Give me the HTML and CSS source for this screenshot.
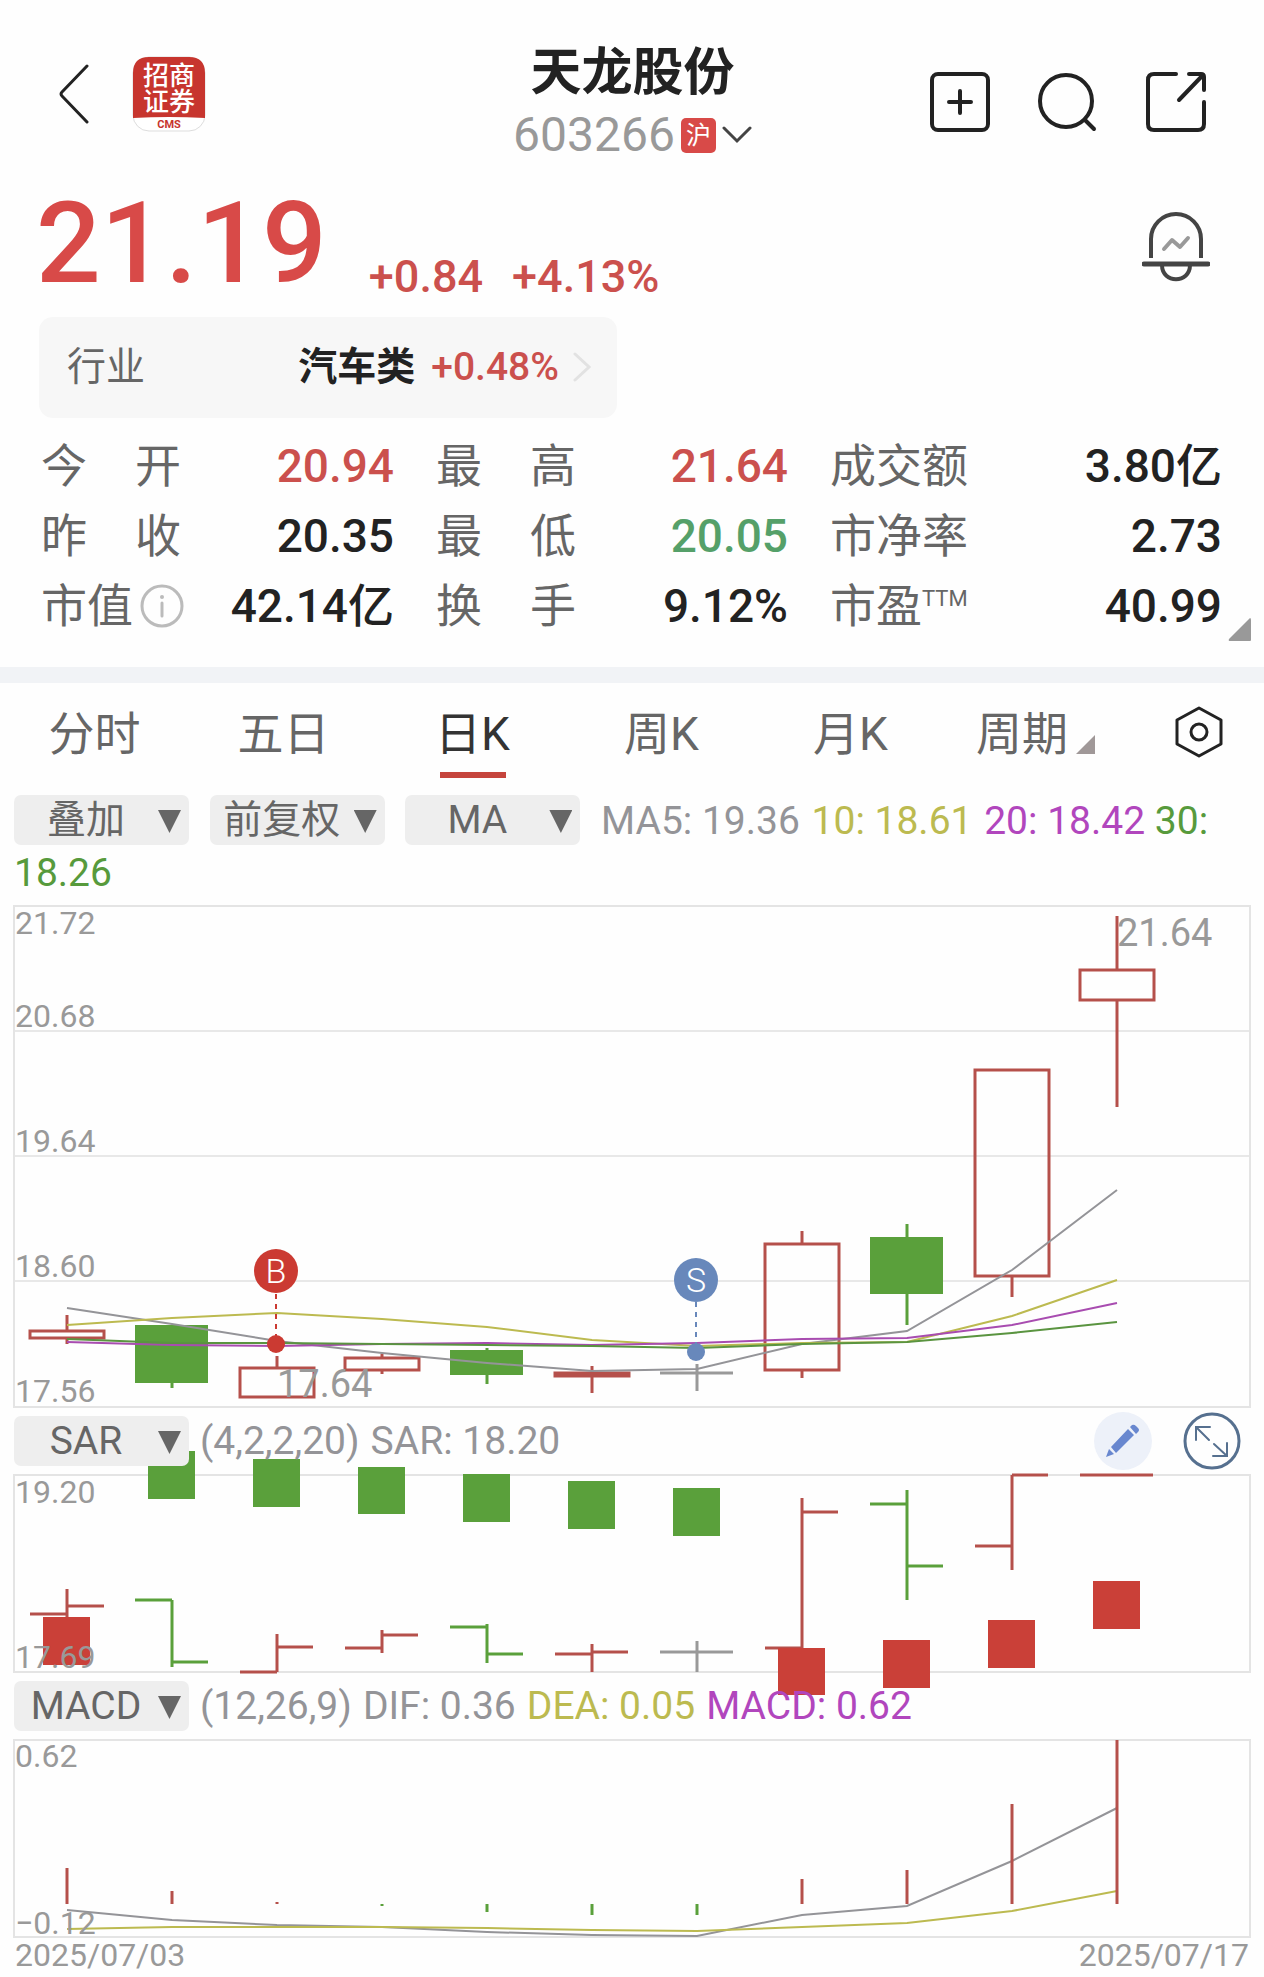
FILE: index.html
```html
<!DOCTYPE html>
<html lang="zh-CN">

<head>
    <meta charset="UTF-8">
    <meta name="viewport" content="width=device-width, initial-scale=1.0">
    <title>天龙股份 603266</title>
    <link rel="stylesheet" href="styles.css">
</head>

<body>
    <header class="top-bar">
        <div class="top-left">
            <button class="icon-btn" type="button" aria-label="返回">
                <svg width="30" height="60" viewBox="0 0 30 60" fill="none" stroke="#222" stroke-width="3" stroke-linecap="round" stroke-linejoin="round">
                    <path d="M28 2 L3 28 Q1 30 3 32 L28 58" />
                </svg>
            </button>
            <svg class="broker-logo" width="74" height="76" viewBox="0 0 74 76">
                <rect x="1" y="1" width="72" height="74" rx="16" fill="#fff" stroke="#ddd" />
                <path d="M1 62 V17 Q1 1 17 1 H57 Q73 1 73 17 V62 Q37 60 1 62 Z" fill="#c7352e" />
                <text class="logo-cn" x="37" y="29">招商</text>
                <text class="logo-cn" x="37" y="55">证券</text>
                <text class="logo-en" x="37" y="72">CMS</text>
            </svg>
        </div>
        <div class="stock">
            <h1 class="stock-name">天龙股份</h1>
            <div class="stock-code">
                <span>603266</span>
                <span class="market">沪</span>
                <svg width="30" height="18" viewBox="0 0 30 18" fill="none" stroke="#444" stroke-width="3" stroke-linecap="round">
                    <path d="M2 2 L15 15 L28 2" />
                </svg>
            </div>
        </div>
        <div class="top-right">
            <button class="icon-btn" type="button" aria-label="加自选">
                <svg width="60" height="60" viewBox="0 0 60 60" fill="none" stroke="#222" stroke-width="4" stroke-linecap="round">
                    <rect x="2" y="2" width="56" height="56" rx="6" />
                    <path d="M30 19 V41 M19 30 H41" />
                </svg>
            </button>
            <button class="icon-btn" type="button" aria-label="搜索">
                <svg width="60" height="60" viewBox="0 0 60 60" fill="none" stroke="#222" stroke-width="4" stroke-linecap="round">
                    <circle cx="28" cy="29" r="26" />
                    <path d="M47 48 L56 57" />
                </svg>
            </button>
            <button class="icon-btn" type="button" aria-label="分享">
                <svg width="60" height="60" viewBox="0 0 60 60" fill="none" stroke="#222" stroke-width="4" stroke-linecap="round" stroke-linejoin="round">
                    <path d="M30 2 H8 Q2 2 2 8 V52 Q2 58 8 58 H52 Q58 58 58 52 V30" />
                    <path d="M43 2 H55 Q58 2 58 5 V18 M57 3 L33 28" />
                </svg>
            </button>
        </div>
    </header>

    <section class="quote">
        <div class="price-row">
            <span class="price">21.19</span>
            <span class="change">+0.84</span>
            <span class="change">+4.13%</span>
            <button class="icon-btn alert-btn" type="button" aria-label="预警">
                <svg width="68" height="70" viewBox="0 0 68 70" fill="none" stroke="#444" stroke-width="4">
                    <path d="M9 46 V27 A25 25 0 0 1 59 27 V46" />
                    <path d="M2 52 H66" stroke-width="5" stroke-linecap="round" />
                    <path d="M20 53 C20 72 48 72 48 53" />
                    <path d="M22 37 L30 28 L38 35 L46 26" stroke="#999" stroke-linecap="round" stroke-linejoin="round" />
                </svg>
            </button>
        </div>

        <a class="industry" href="#">
            <span class="industry-label">行业</span>
            <strong class="industry-name">汽车类</strong>
            <span class="industry-change">+0.48%</span>
            <svg width="18" height="30" viewBox="0 0 18 30" fill="none" stroke="#e2e2e2" stroke-width="3" stroke-linecap="round">
                <path d="M2 2 L16 15 L2 28" />
            </svg>
        </a>

        <dl class="stats">
            <div class="stat"><dt class="spread">今开</dt><dd class="up">20.94</dd></div>
            <div class="stat"><dt class="spread">最高</dt><dd class="up">21.64</dd></div>
            <div class="stat"><dt>成交额</dt><dd>3.80亿</dd></div>
            <div class="stat"><dt class="spread">昨收</dt><dd>20.35</dd></div>
            <div class="stat"><dt class="spread">最低</dt><dd class="down">20.05</dd></div>
            <div class="stat"><dt>市净率</dt><dd>2.73</dd></div>
            <div class="stat">
                <dt class="with-info">市值
                    <svg width="44" height="44" viewBox="0 0 44 44" fill="none" stroke="#bbb" stroke-width="3">
                        <circle cx="22" cy="22" r="20" />
                        <path d="M22 19 V32" stroke-linecap="round" />
                        <circle cx="22" cy="13" r="2" fill="#bbb" stroke="none" />
                    </svg>
                </dt>
                <dd>42.14亿</dd>
            </div>
            <div class="stat"><dt class="spread">换手</dt><dd>9.12%</dd></div>
            <div class="stat"><dt>市盈<sup>TTM</sup></dt><dd>40.99</dd></div>
        </dl>
        <svg class="expand-corner" width="23" height="23" viewBox="0 0 23 23"><path d="M22 0 Q23 0 23 2 V22 Q23 23 22 23 H2 Q0 23 1 21 Z" fill="#999" /></svg>
    </section>

    <nav class="tabs">
        <button class="tab" type="button">分时</button>
        <button class="tab" type="button">五日</button>
        <button class="tab active" type="button">日K</button>
        <button class="tab" type="button">周K</button>
        <button class="tab" type="button">月K</button>
        <button class="tab more" type="button">周期</button>
        <button class="tab" type="button" aria-label="设置">
            <svg width="48" height="52" viewBox="0 0 48 52" fill="none" stroke="#222" stroke-width="3" stroke-linejoin="round">
                <path d="M24 2 L46 14 V38 L24 50 L2 38 V14 Z" />
                <circle cx="24" cy="26" r="8" />
            </svg>
        </button>
    </nav>

    <main class="charts">
        <div class="toolbar">
            <span class="picker"><select aria-label="叠加"><option>叠加</option></select></span>
            <span class="picker"><select aria-label="复权"><option>前复权</option></select></span>
            <span class="picker"><select aria-label="主图指标"><option>MA</option></select></span>
            <span class="ma5">MA5: 19.36</span>
            <span class="ma10">10: 18.61</span>
            <span class="ma20">20: 18.42</span>
            <span class="ma30">30:</span>
            <span class="ma30">18.26</span>
        </div>

        <svg class="chart" viewBox="0 0 1264 503">
            <g class="grid">
                <path d="M14 126 H1250 M14 251 H1250 M14 376 H1250" stroke="#d2d2d2" stroke-width="1" />
                <rect x="14" y="1" width="1236" height="501" />
            </g>

            <!-- candles, 105 apart -->
            <g class="up-line">
                <path d="M67 410 V426 M67 433 V439" />
                <rect x="30" y="426" width="74" height="7" />
                <path d="M277 451 V463" />
                <rect x="240" y="463" width="74" height="29" />
                <path d="M382 449 V453 M382 465 V469" />
                <rect x="345" y="453" width="74" height="12" />
                <path d="M592 461 V488" />
                <rect x="555" y="468" width="74" height="3" />
                <path d="M802 326 V339 M802 465 V473" />
                <rect x="765" y="339" width="74" height="126" />
                <path d="M1012 371 V392" />
                <rect x="975" y="165" width="74" height="206" />
                <path d="M1117 11 V65 M1117 95 V202" />
                <rect x="1080" y="65" width="74" height="30" />
            </g>
            <g class="down-line">
                <path d="M172 478 V483 M487 443 V479 M907 319 V420" />
                <rect x="135" y="420" width="73" height="58" />
                <rect x="450" y="445" width="73" height="25" />
                <rect x="870" y="332" width="73" height="57" />
            </g>
            <path class="flat-line" d="M697 459 V486 M660 468 H733" />

            <text class="mark-text" x="277" y="492">17.64</text>
            <text class="mark-text" x="1117" y="41">21.64</text>

            <polyline class="line ma5-line" points="67,403 172,419 277,436 382,448 487,458 592,466 697,464 802,439 907,426 1012,365 1117,285" />
            <polyline class="line ma10-line" points="67,420 172,413 277,408 382,414 487,422 592,435 697,441 802,438 907,437 1012,411 1117,375" />
            <polyline class="line ma20-line" points="67,437 172,440 277,441 382,439 487,438 592,440 697,438 802,434 907,433 1012,420 1117,398" />
            <polyline class="line ma30-line" points="67,434 172,438 277,438 382,439 487,440 592,441 697,443 802,439 907,437 1012,428 1117,417" />

            <!-- buy / sell marks -->
            <path d="M276 389 V431" stroke="#cb3a32" stroke-width="2" stroke-dasharray="5 5" />
            <circle cx="276" cy="366" r="22" fill="#cb3a32" />
            <circle cx="276" cy="439" r="9" fill="#cb3a32" />
            <text class="badge-text" x="276" y="378">B</text>
            <path d="M696 397 V439" stroke="#6888bb" stroke-width="2" stroke-dasharray="5 5" />
            <circle cx="696" cy="375" r="22" fill="#6888bb" />
            <circle cx="696" cy="447" r="9" fill="#6888bb" />
            <text class="badge-text" x="696" y="387">S</text>

            <g class="axis">
                <text x="15" y="29">21.72</text>
                <text x="15" y="122">20.68</text>
                <text x="15" y="247">19.64</text>
                <text x="15" y="372">18.60</text>
                <text x="15" y="497">17.56</text>
            </g>
        </svg>

        <div class="sub-bar">
            <span class="picker"><select aria-label="副图指标一"><option>SAR</option></select></span>
            <span class="ma5">(4,2,2,20)</span>
            <span class="ma5">SAR: 18.20</span>
            <div class="sub-tools">
                <button class="icon-btn" type="button" aria-label="画线">
                    <svg width="58" height="58" viewBox="0 0 58 58">
                        <circle cx="29" cy="29" r="29" fill="#edf1f9" />
                        <path d="M17 35 L34 17 L40 23 L22 41 Z M36 15 L38 13 Q40 12 42 14 L44 16 Q46 18 44 20 L42 22 Z M15 37 L20 42 L12 45 Z" fill="#6887cf" />
                    </svg>
                </button>
                <button class="icon-btn" type="button" aria-label="全屏">
                    <svg width="58" height="58" viewBox="0 0 58 58" fill="none" stroke="#56708f" stroke-width="3">
                        <circle cx="29" cy="29" r="27" />
                        <path d="M13 28 V15 H27 M13 15 L26 28 M31 32 L44 44 M44 31 V44 H30" stroke-width="2" stroke-linecap="round" />
                    </svg>
                </button>
            </div>
        </div>

        <svg class="chart" viewBox="0 0 1264 199">
            <rect class="grid" x="14" y="1" width="1236" height="197" />
            <g class="up-line">
                <path d="M30 140 H67 M67 115 V145 M67 132 H104" />
                <path d="M240 198 H277 M277 160 V198 M277 173 H313" />
                <path d="M345 174 H382 M382 156 V179 M382 161 H418" />
                <path d="M555 180 H592 M592 170 V198 M592 178 H628" />
                <path d="M765 174 H802 M802 24 V176 M802 38 H838" />
                <path d="M975 72 H1012 M1012 1 V96 M1012 1 H1048" />
                <path d="M1080 1 H1153" />
            </g>
            <g class="down-line">
                <path d="M135 126 H172 M172 126 V193 M172 188 H208" />
                <path d="M450 153 H487 M487 150 V189 M487 180 H523" />
                <path d="M870 30 H907 M907 16 V126 M907 92 H943" />
            </g>
            <path class="flat-line" d="M697 167 V198 M660 178 H733" />
            <g class="sar-down">
                <rect x="148" y="-23" width="47" height="48" />
                <rect x="253" y="-15" width="47" height="48" />
                <rect x="358" y="-7" width="47" height="47" />
                <rect x="463" y="0" width="47" height="48" />
                <rect x="568" y="7" width="47" height="48" />
                <rect x="673" y="14" width="47" height="48" />
            </g>
            <g class="sar-up">
                <rect x="43" y="143" width="47" height="48" />
                <rect x="778" y="174" width="47" height="47" />
                <rect x="883" y="166" width="47" height="48" />
                <rect x="988" y="146" width="47" height="48" />
                <rect x="1093" y="107" width="47" height="48" />
            </g>
            <g class="axis">
                <text x="15" y="29">19.20</text>
                <text x="15" y="194">17.69</text>
            </g>
        </svg>

        <div class="sub-bar">
            <span class="picker"><select aria-label="副图指标二"><option>MACD</option></select></span>
            <span class="ma5">(12,26,9)</span>
            <span class="ma5">DIF: 0.36</span>
            <span class="ma10">DEA: 0.05</span>
            <span class="ma20">MACD: 0.62</span>
        </div>

        <svg class="chart" viewBox="0 0 1264 199">
            <rect class="grid" x="14" y="1" width="1236" height="197" />
            <polyline class="line ma5-line" points="67,171 172,181 277,186 382,188 487,193 592,196 697,197 802,176 907,167 1012,122 1117,69" />
            <polyline class="line ma10-line" points="67,190 172,188 277,188 382,188 487,189 592,191 697,192 802,188 907,184 1012,172 1117,152" />
            <path class="up-line" d="M67 129 V165 M172 152 V165 M277 163 V165 M802 140 V165 M907 131 V165 M1012 65 V165 M1117 1 V165" />
            <path class="down-line" d="M382 165 V167 M487 165 V173 M592 165 V176 M697 165 V176" />
            <g class="axis">
                <text x="15" y="28">0.62</text>
                <text x="15" y="195">−0.12</text>
            </g>
        </svg>

        <div class="dates">
            <span>2025/07/03</span>
            <span>2025/07/17</span>
        </div>
    </main>
</body>

</html>
```
FILE: styles.css
```css
* {
    box-sizing: border-box;
}

body {
    margin: 0;
    background: #fefefe;
    color: #222;
    font-family: Roboto, "Noto Sans CJK SC", sans-serif;
}

button {
    padding: 0;
    border: 0;
    background: none;
    font-family: inherit;
    color: inherit;
}

svg {
    display: block;
}

/* header */
.top-bar {
    display: grid;
    grid-template-columns: 1fr auto 1fr;
    align-items: center;
    padding: 39px 58px 0 59px;
}

.top-left {
    display: flex;
    align-items: center;
    gap: 43px;
    padding-bottom: 16px;
}

.logo-cn {
    font-family: "Noto Sans CJK SC", sans-serif;
    font-size: 26px;
    font-weight: 500;
    text-anchor: middle;
    fill: #fff;
}

.logo-en {
    font-size: 11px;
    font-weight: 700;
    text-anchor: middle;
    fill: #c7352e;
}

.stock {
    padding-top: 2px;
}

.stock-name {
    margin: 0;
    font-size: 51px;
    line-height: 64px;
    font-weight: 700;
    text-align: center;
}

.stock-code {
    display: flex;
    align-items: center;
    justify-content: center;
    gap: 6px;
    font-size: 48px;
    line-height: 60px;
    color: #999;
}

.market {
    width: 35px;
    border-radius: 5px;
    background: #d84a48;
    color: #fff;
    font-size: 25px;
    line-height: 35px;
    text-align: center;
}

.top-right {
    display: flex;
    justify-content: flex-end;
    gap: 48px;
}

/* quote */
.quote {
    position: relative;
    padding: 19px 42px 26px 41px;
    border-bottom: 16px solid #f1f3f6;
}

.price-row {
    display: flex;
    align-items: flex-end;
    padding-right: 12px;
}

.price {
    margin-left: -5px;
    margin-right: 13px;
    color: #d84a48;
    font-size: 114px;
    line-height: 118px;
    font-weight: 500;
}

.change {
    margin-left: 29px;
    color: #cb504d;
    font-size: 45px;
    line-height: 50px;
    font-weight: 500;
}

.alert-btn {
    align-self: flex-end;
    margin: 0 0 20px auto;
}

.industry {
    display: flex;
    align-items: center;
    max-width: 578px;
    margin: 15px 0 13px -2px;
    padding: 25px 26px 26px 28px;
    border-radius: 14px;
    background: #f7f7f7;
    color: #222;
    font-size: 39px;
    line-height: 50px;
    text-decoration: none;
}

.industry-label {
    margin-right: auto;
    color: #666;
}

.industry-name {
    margin-right: 16px;
}

.industry-change {
    margin-right: 14px;
    color: #cb504d;
    font-weight: 500;
}

.stats {
    display: grid;
    grid-template-columns: 353fr 352fr 392fr;
    column-gap: 42px;
    margin: 0;
    font-size: 46px;
    line-height: 70px;
}

.stat {
    display: flex;
    justify-content: space-between;
}

.stat dt {
    color: #666;
}

.stat dd {
    margin: 0;
    font-weight: 500;
}

.stat .spread {
    width: 140px;
    text-align-last: justify;
    text-justify: inter-character;
}

.stat .up {
    color: #cb504d;
}

.stat .down {
    color: #55a069;
}

.with-info {
    display: flex;
    align-items: center;
    gap: 7px;
}

.stat sup {
    font-size: 22px;
    line-height: 22px;
}

.expand-corner {
    position: absolute;
    right: 13px;
    bottom: 26px;
}

/* period tabs */
.tabs {
    display: grid;
    grid-template-columns: repeat(6, 1fr) 130px;
    padding: 23px 0 17px;
}

.tab {
    display: flex;
    flex-direction: column;
    align-items: center;
    height: 72px;
    color: #666;
    font-size: 46px;
    line-height: 56px;
}

.tab.active {
    color: #333;
}

.tab.active::after {
    content: "";
    width: 66px;
    height: 6px;
    margin-top: 10px;
    background: #c5443c;
}

.tab.more {
    flex-direction: row;
    align-items: flex-start;
    justify-content: center;
    gap: 8px;
    padding-right: 8px;
}

.tab.more::after {
    content: "";
    width: 19px;
    height: 19px;
    margin-top: 29px;
    background: #a09898;
    clip-path: polygon(100% 0, 100% 100%, 0 100%);
}

/* charts */
.toolbar {
    padding: 0 14px 6px;
    font-size: 39px;
    line-height: 52px;
}

.toolbar .picker {
    margin-right: 11px;
    vertical-align: top;
}

.toolbar .ma5,
.toolbar .ma10 {
    margin-right: 2px;
}

.picker {
    position: relative;
    display: inline-block;
    width: 175px;
    height: 50px;
}

.picker select {
    appearance: none;
    display: block;
    width: 100%;
    height: 100%;
    padding: 0 31px 0 0;
    border: 0;
    border-radius: 7px;
    background: #eee;
    color: #666;
    font-family: inherit;
    font-size: 39px;
    text-align-last: center;
}

.picker::after {
    content: "";
    position: absolute;
    top: 15px;
    right: 8px;
    width: 23px;
    height: 23px;
    background: #666;
    clip-path: polygon(0 0, 100% 0, 50% 100%);
    pointer-events: none;
}

.ma5 {
    color: #949498;
}

.ma10 {
    color: #bcba50;
}

.ma20 {
    color: #b146bd;
}

.ma30 {
    color: #579a3c;
}

.sub-bar {
    position: relative;
    z-index: 1;
    display: flex;
    align-items: center;
    gap: 11px;
    height: 50px;
    margin: 8px 0;
    padding: 0 23px 0 14px;
    font-size: 39px;
}

.sub-tools {
    display: flex;
    gap: 31px;
    margin-left: auto;
}

.chart {
    width: 100%;
    height: auto;
    overflow: visible;
}

.grid {
    fill: none;
    stroke: #e4e4e4;
    stroke-width: 2;
}

.up-line {
    fill: none;
    stroke: #b5504b;
    stroke-width: 3;
}

.down-line {
    fill: #5aa03b;
    stroke: #5aa03b;
    stroke-width: 3;
}

.down-line rect {
    stroke: none;
}

.flat-line {
    stroke: #999;
    stroke-width: 3;
}

.sar-up {
    fill: #ca4038;
}

.sar-down {
    fill: #5aa03b;
}

.line {
    fill: none;
    stroke-width: 2;
}

.ma5-line {
    stroke: #949498;
}

.ma10-line {
    stroke: #bcba50;
}

.ma20-line {
    stroke: #a84cb0;
}

.ma30-line {
    stroke: #5a9440;
}

.axis {
    font-size: 32px;
    fill: #999;
}

.mark-text {
    font-size: 38px;
    fill: #999;
}

.badge-text {
    font-size: 34px;
    font-weight: 300;
    fill: #fff;
    text-anchor: middle;
}

.dates {
    display: flex;
    justify-content: space-between;
    padding: 0 15px;
    color: #999;
    font-size: 32px;
    line-height: 35px;
}
```
